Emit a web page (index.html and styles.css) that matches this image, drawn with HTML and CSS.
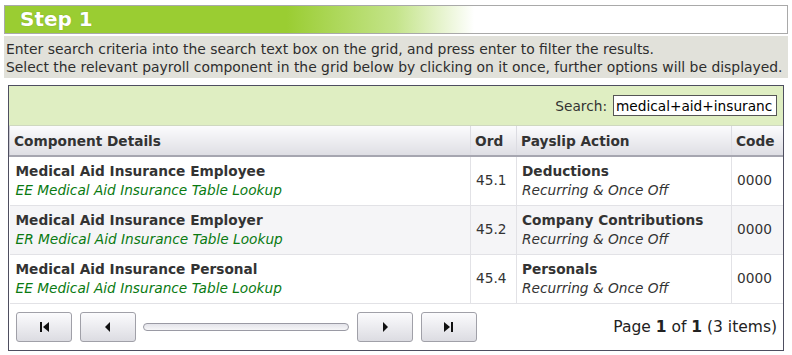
FILE: index.html
```html
<!DOCTYPE html>
<html lang="en">
<head>
  <meta charset="UTF-8" />
  <title>Step 1</title>
  <link rel="stylesheet" href="styles.css">
</head>
<body>

  <!-- Step header -->
  <div class="step-head">Step 1</div>

  <div class="intro">
    Enter search criteria into the search text box on the grid, and press enter to filter the results.<br>
    Select the relevant payroll component in the grid below by clicking on it once, further options will be displayed.
  </div>

  <div class="grid">
    <div class="toolbar">
      <label for="search">Search:</label>
      <input type="text" id="search" value="medical+aid+insuranc" />
    </div>

    <table>
      <colgroup>
        <col class="c-comp"><col class="c-ord"><col class="c-act"><col class="c-code">
      </colgroup>
      <thead>
        <tr>
          <th>Component Details</th>
          <th>Ord</th>
          <th>Payslip Action</th>
          <th>Code</th>
        </tr>
      </thead>
      <tbody>
        <tr>
          <td><b>Medical Aid Insurance Employee</b><br><i class="green">EE Medical Aid Insurance Table Lookup</i></td>
          <td>45.1</td>
          <td><b>Deductions</b><br><i>Recurring &amp; Once Off</i></td>
          <td>0000</td>
        </tr>
        <tr class="alt">
          <td><b>Medical Aid Insurance Employer</b><br><i class="green">ER Medical Aid Insurance Table Lookup</i></td>
          <td>45.2</td>
          <td><b>Company Contributions</b><br><i>Recurring &amp; Once Off</i></td>
          <td>0000</td>
        </tr>
        <tr>
          <td><b>Medical Aid Insurance Personal</b><br><i class="green">EE Medical Aid Insurance Table Lookup</i></td>
          <td>45.4</td>
          <td><b>Personals</b><br><i>Recurring &amp; Once Off</i></td>
          <td>0000</td>
        </tr>
      </tbody>
    </table>

    <div class="pager">
      <button class="pg-btn" title="First">
        <svg width="12" height="12" viewBox="0 0 12 12"><rect x="2" y="1" width="2" height="10" fill="#111"/><polygon points="11,1 5,6 11,11" fill="#111"/></svg>
      </button>
      <button class="pg-btn" title="Previous">
        <svg width="12" height="12" viewBox="0 0 12 12"><polygon points="8,1 3,6 8,11" fill="#111"/></svg>
      </button>
      <div class="track"></div>
      <button class="pg-btn" title="Next">
        <svg width="12" height="12" viewBox="0 0 12 12"><polygon points="4,1 9,6 4,11" fill="#111"/></svg>
      </button>
      <button class="pg-btn" title="Last">
        <svg width="12" height="12" viewBox="0 0 12 12"><polygon points="1,1 7,6 1,11" fill="#111"/><rect x="8" y="1" width="2" height="10" fill="#111"/></svg>
      </button>
      <div class="page-info">Page <b>1</b> of <b>1</b> (3 items)</div>
    </div>
  </div>

</body>
</html>
```

FILE: styles.css
```css
body {
  font-family: "DejaVu Sans", Verdana, sans-serif;
  font-size: 13.7px;
  color: #333;
  background: #fff;
  margin: 0;
  padding: 5px 4px 0 4px;
}
.step-head {
  height: 27px;
  line-height: 27px;
  border: 1px solid #a9a9a9;
  background: linear-gradient(90deg, #9acd32 0%, #9acd32 36%, #c4e48a 50%, #fff 60%);
  color: #fff;
  font-size: 20px;
  font-weight: bold;
  padding-left: 15px;
  text-shadow: 0 0 1px rgba(80,110,0,0.6);
}
.intro {
  margin-top: 2px;
  background: #e1e1da;
  padding: 4px 2px;
  height: 34px;
  font-size: 13.9px;
  line-height: 18px;
  color: #2e2e2e;
}
.grid {
  margin: 7px 4px 0 4px;
  border: 1px solid #4e4e60;
  background: #fff;
}
.toolbar {
  height: 39px;
  background: #dfeec2;
  border-bottom: 1px solid #cfd8c0;
  display: flex;
  align-items: center;
  justify-content: flex-end;
  padding-right: 6px;
  gap: 6px;
}
.toolbar input {
  width: 164px;
  height: 21px;
  box-sizing: border-box;
  border: 1px solid #555;
  padding: 0 2px;
  font-family: "DejaVu Sans", Verdana, sans-serif;
  font-size: 13.7px;
  color: #000;
}
table {
  width: 100%;
  border-collapse: collapse;
  table-layout: fixed;
}
.c-comp { width: 461px; }
.c-ord { width: 46px; }
.c-act { width: 215px; }
.c-code { width: auto; }
th {
  height: 30px;
  box-sizing: border-box;
  text-align: left;
  font-weight: bold;
  padding: 0 4px;
  background: linear-gradient(#fbfbfd, #dedee4);
  border-bottom: 2px solid #a6a6b0;
  border-left: 1px solid #dcdce2;
}
th:first-child {
  border-left: 1px solid #c8c8d0;
}
td {
  height: 49px;
  box-sizing: border-box;
  padding: 0 5px;
  border-bottom: 1px solid #e2e2e6;
  border-left: 1px solid #e2e2e6;
  vertical-align: middle;
  line-height: 19px;
  white-space: nowrap;
}
td:first-child {
  border-left: none;
  padding-left: 6px;
}
tr.alt td {
  background: #f5f5f7;
}
.green {
  color: #0a7a12;
}
.pager {
  height: 46px;
  display: flex;
  align-items: center;
  padding: 0 6px 0 7px;
  gap: 8px;
}
.pg-btn {
  width: 56px;
  height: 30px;
  border: 1px solid #a0a0a8;
  border-radius: 3px;
  background: linear-gradient(#fbfbfd, #dcdce2);
  display: flex;
  align-items: center;
  justify-content: center;
  padding: 0;
}
.track {
  width: 204px;
  height: 6px;
  margin-left: -1px;
  border: 1px solid #9a9aa4;
  border-radius: 4px;
  background: linear-gradient(#e4e4ea, #f6f6f8);
}
.page-info {
  margin-left: auto;
  font-size: 15.5px;
  color: #222;
}
```
